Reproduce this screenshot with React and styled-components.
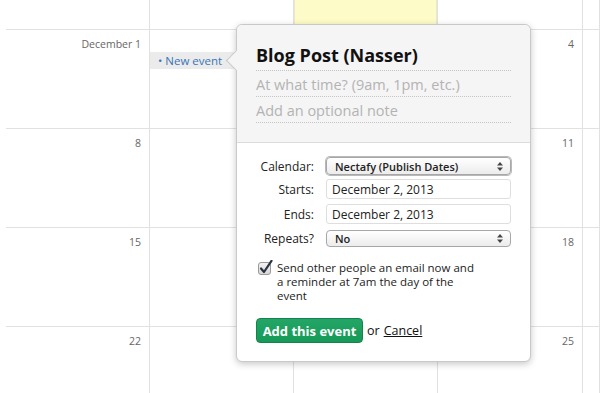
import React from 'react'
import styled, { createGlobalStyle } from 'styled-components'

const GlobalStyle = createGlobalStyle`
  html, body {
    margin: 0;
    padding: 0;
    background: #fff;
  }
  body {
    font-family: "Open Sans", "Liberation Sans", sans-serif;
    color: #222;
    width: 600px;
    height: 393px;
    overflow: hidden;
  }
`

const Page = styled.div`
  position: relative;
  width: 600px;
  height: 393px;
  overflow: hidden;
  padding-left: 6px;
  box-sizing: border-box;
`

const Grid = styled.div`
  display: grid;
  grid-template-columns: 144px 144px 144px 145px 1fr;
  grid-template-rows: 29px repeat(4, 99px);
`

const Cell = styled.div`
  border-right: 1px solid #e1e1df;
  border-top: ${p => (p.$first ? 'none' : '1px solid #e1e1df')};
  background: ${p => (p.$today ? '#fdfcc8' : 'transparent')};
  box-shadow: ${p => (p.$today ? 'inset 1px 0 0 #ebe9c4, inset -1px 0 0 #ebe9c4' : 'none')};
  display: flex;
  flex-direction: column;
  align-items: stretch;
  min-width: 0;
`

const DayNum = styled.div`
  font-size: 10.5px;
  color: #666;
  text-align: right;
  padding: 6px 8px 0 0;
  height: 16px;
  line-height: 16px;
`

const Chip = styled.div`
  margin-top: 22px;
  height: 17px;
  background: #ebebeb;
  color: #3776b8;
  font-size: 11.5px;
  line-height: 17px;
  padding-left: 8px;
  white-space: nowrap;
`

const Popup = styled.div`
  position: absolute;
  left: 236px;
  top: 24px;
  width: 295px;
  height: 338px;
  box-sizing: border-box;
  background: #fff;
  border: 1px solid #c9c9c9;
  border-radius: 6px;
  box-shadow: 0 2px 7px rgba(0, 0, 0, 0.22);
  display: flex;
  flex-direction: column;
`

const Pointer = styled.div`
  position: absolute;
  left: -8px;
  top: 28px;
  width: 14px;
  height: 14px;
  background: #f5f5f5;
  border-left: 1px solid #c9c9c9;
  border-bottom: 1px solid #c9c9c9;
  transform: rotate(45deg);
`

const Head = styled.div`
  background: #f5f5f5;
  border-radius: 6px 6px 0 0;
  border-bottom: 1px solid #dcdcdc;
  padding: 19px 19px 19px 19px;
`

const Field = styled.div`
  height: ${p => (p.$title ? '26px' : '25px')};
  line-height: ${p => (p.$title ? '23px' : '28px')};
  border-bottom: 1px dotted #c4c4c4;
  font-size: ${p => (p.$title ? '18px' : '14.5px')};
  font-weight: ${p => (p.$title ? 700 : 400)};
  color: ${p => (p.$title ? '#111' : '#b3b3b3')};
  white-space: nowrap;
`

const Body = styled.div`
  padding: 14px 19px 0 19px;
  display: flex;
  flex-direction: column;
`

const FormRow = styled.div`
  display: grid;
  grid-template-columns: 58px 185px;
  column-gap: 12px;
  align-items: center;
  margin-top: ${p => p.$gap || 0}px;
`

const Label = styled.div`
  font-size: 12px;
  color: #222;
  text-align: right;
`

const Select = styled.div`
  height: ${p => p.$h}px;
  box-sizing: border-box;
  border: 1px solid #a7a7a7;
  border-radius: 4px;
  background: linear-gradient(#ffffff, #ececec);
  box-shadow: ${p => (p.$focus ? '0 0 0 1px #b9b9b9' : 'none')};
  display: flex;
  align-items: center;
  justify-content: space-between;
  padding: 0 7px 0 8px;
  font-size: 11px;
  font-weight: 600;
  color: #222;
`

const Input = styled.div`
  height: 20px;
  box-sizing: border-box;
  border: 1px solid #dedede;
  border-radius: 3px;
  background: #fff;
  display: flex;
  align-items: center;
  padding-left: 5px;
  font-size: 12px;
  color: #222;
`

const CheckRow = styled.label`
  display: flex;
  align-items: flex-start;
  gap: 4px;
  margin-top: 14px;
  padding-left: 2px;
`

const CheckText = styled.div`
  font-size: 11.5px;
  line-height: 14px;
  color: #222;
  width: 198px;
`

const Actions = styled.div`
  display: flex;
  align-items: center;
  gap: 4px;
  margin-top: 15px;
  font-size: 12.5px;
  color: #111;
`

const AddButton = styled.button`
  width: 107px;
  height: 25px;
  border: 1px solid #14844c;
  border-radius: 4px;
  background: linear-gradient(#22a566, #169a58);
  color: #fff;
  font-family: inherit;
  font-size: 13px;
  font-weight: 700;
  padding: 0;
  cursor: pointer;
`

const CancelLink = styled.a`
  color: #111;
  text-decoration: underline;
  cursor: pointer;
`

const Arrows = () => (
  <svg width="6" height="9" viewBox="0 0 6 9">
    <path d="M3 0 L6 3.5 L0 3.5 Z" fill="#444" />
    <path d="M3 9 L6 5.5 L0 5.5 Z" fill="#444" />
  </svg>
)

const CheckBox = () => (
  <svg width="15" height="15" viewBox="0 0 15 15" style={{ flexShrink: 0, marginTop: -1 }}>
    <defs>
      <linearGradient id="cb" x1="0" y1="0" x2="0" y2="1">
        <stop offset="0" stopColor="#f4f4f4" />
        <stop offset="1" stopColor="#d6d6d6" />
      </linearGradient>
    </defs>
    <rect x="0.5" y="2.5" width="12" height="12" rx="2.5" fill="url(#cb)" stroke="#9a9a9a" />
    <path d="M3 8.5 L6 12 L13.5 0.8" fill="none" stroke="#2b3340" strokeWidth="2.2" strokeLinecap="round" strokeLinejoin="round" />
  </svg>
)

// day numbers for the two columns under the popup are hidden anyway
const weeks = [
  [null, null, null, null, null],
  ['December 1', null, null, '4', null],
  ['8', null, null, '11', null],
  ['15', null, null, '18', null],
  ['22', null, null, '25', null],
]

const App = () => {
  return (
    <Page>
      <GlobalStyle />
      <Grid>
        {weeks.map((week, w) =>
          week.map((day, d) => (
            <Cell key={`${w}-${d}`} $first={w === 0} $today={w === 0 && d === 2}>
              {day && <DayNum>{day}</DayNum>}
              {w === 1 && d === 1 && <Chip>• New event</Chip>}
            </Cell>
          ))
        )}
      </Grid>

      <Popup>
        <Pointer />
        <Head>
          <Field $title>Blog Post (Nasser)</Field>
          <Field>At what time? (9am, 1pm, etc.)</Field>
          <Field>Add an optional note</Field>
        </Head>
        <Body>
          <FormRow>
            <Label>Calendar:</Label>
            <Select $h={18} $focus>
              <span>Nectafy (Publish Dates)</span>
              <Arrows />
            </Select>
          </FormRow>
          <FormRow $gap={4}>
            <Label>Starts:</Label>
            <Input>December 2, 2013</Input>
          </FormRow>
          <FormRow $gap={5}>
            <Label>Ends:</Label>
            <Input>December 2, 2013</Input>
          </FormRow>
          <FormRow $gap={6}>
            <Label>Repeats?</Label>
            <Select $h={17}>
              <span>No</span>
              <Arrows />
            </Select>
          </FormRow>
          <CheckRow>
            <CheckBox />
            <CheckText>Send other people an email now and a reminder at 7am the day of the event</CheckText>
          </CheckRow>
          <Actions>
            <AddButton>Add this event</AddButton>
            <span>or</span>
            <CancelLink>Cancel</CancelLink>
          </Actions>
        </Body>
      </Popup>
    </Page>
  )
}

export default App
